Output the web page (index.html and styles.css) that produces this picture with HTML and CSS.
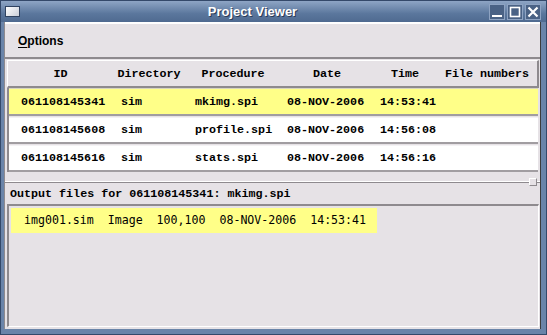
FILE: index.html
```html
<!DOCTYPE html>
<html lang="en">
<head>
  <meta charset="UTF-8" />
  <title>Project Viewer</title>
  <link rel="stylesheet" href="styles.css">
</head>
<body>

  <div class="win">
    <div class="titlebar">
      <span class="appicon"></span>
      <span class="title">Project Viewer</span>
      <div class="wbtns">
        <span class="wbtn">
          <svg width="14" height="14" viewBox="0 0 14 14"><rect x="2" y="10" width="10" height="2" fill="#fff"/></svg>
        </span>
        <span class="wbtn">
          <svg width="14" height="14" viewBox="0 0 14 14"><rect x="2.5" y="2.5" width="9" height="9" fill="none" stroke="#fff" stroke-width="1.6"/></svg>
        </span>
        <span class="wbtn">
          <svg width="14" height="14" viewBox="0 0 14 14"><path d="M2.5 2.5 L11.5 11.5 M11.5 2.5 L2.5 11.5" stroke="#fff" stroke-width="2.2"/></svg>
        </span>
      </div>
    </div>

    <div class="client">
      <div class="menubar">
        <span class="menu"><u>O</u>ptions</span>
      </div>

      <div class="toppane">
        <div class="thead">
          <span class="th">ID</span>
          <span class="th">Directory</span>
          <span class="th">Procedure</span>
          <span class="th">Date</span>
          <span class="th">Time</span>
          <span class="th">File numbers</span>
        </div>
        <div class="rows">
          <div class="row selected">
            <span class="td">061108145341</span>
            <span class="td">sim</span>
            <span class="td">mkimg.spi</span>
            <span class="td">08-NOV-2006</span>
            <span class="td">14:53:41</span>
            <span class="td"></span>
          </div>
          <div class="row">
            <span class="td">061108145608</span>
            <span class="td">sim</span>
            <span class="td">profile.spi</span>
            <span class="td">08-NOV-2006</span>
            <span class="td">14:56:08</span>
            <span class="td"></span>
          </div>
          <div class="row">
            <span class="td">061108145616</span>
            <span class="td">sim</span>
            <span class="td">stats.spi</span>
            <span class="td">08-NOV-2006</span>
            <span class="td">14:56:16</span>
            <span class="td"></span>
          </div>
        </div>
      </div>

      <div class="sash"><span class="handle"></span></div>

      <div class="bottompane">
        <div class="outlabel">Output files for 061108145341: mkimg.spi</div>
        <div class="listbox">
          <div class="item selected">img001.sim  Image  100,100  08-NOV-2006  14:53:41</div>
        </div>
      </div>
    </div>
  </div>

</body>
</html>
```

FILE: styles.css
```css
body {
  margin: 0;
  width: 547px;
  height: 335px;
  overflow: hidden;
  font-family: 'Liberation Sans', sans-serif;
  background: #6a84a9;
}

.win {
  box-sizing: border-box;
  height: 335px;
  display: flex;
  flex-direction: column;
  background: #6a84a9;
  border: 1px solid #34496a;
}

/* title bar */
.titlebar {
  height: 21px;
  display: flex;
  align-items: center;
  background: linear-gradient(#8ea5c5, #5b779d 60%, #4f6a90);
  position: relative;
}

.appicon {
  width: 13px;
  height: 9px;
  margin-left: 4px;
  margin-top: -1px;
  border: 1px solid #2f4260;
  background: linear-gradient(135deg, #ffffff, #c9ced8);
}

.title {
  flex: 1;
  text-align: center;
  color: #fff;
  font-weight: bold;
  font-size: 13px;
  text-shadow: 1px 1px 0 #2b3b57;
  margin-left: -4px;
}

.wbtns {
  display: flex;
  gap: 2px;
  margin-right: 5px;
}

.wbtn {
  width: 14px;
  height: 14px;
  display: flex;
  align-items: center;
  justify-content: center;
  background: #4a6285;
  border: 1px solid #8ea3c2;
}

/* client area */
.client {
  flex: 1;
  margin: 0 5px 5px 3px;
  display: flex;
  flex-direction: column;
  background: #e6e2e6;
  border-left: 1px solid #8e8a8e;
  border-right: 1px solid #3c3c3c;
}

.menubar {
  height: 33px;
  display: flex;
  align-items: center;
  border-top: 2px solid #ffffff;
  border-bottom: 2px solid #8e8a8e;
  padding-left: 13px;
}

.menu {
  font-weight: bold;
  font-size: 12px;
  color: #000;
  margin-top: 1px;
}

.menu u {
  text-decoration-thickness: 1px;
  text-underline-offset: 2px;
}

/* project table */
.toppane {
  height: 119px;
  margin: 1px 1px 0 2px;
  font-family: 'Liberation Mono', monospace;
  font-size: 11.7px;
  font-weight: bold;
  color: #000;
}

.thead,
.row {
  display: grid;
  grid-template-columns: 105px 72px 96px 92px 64px 1fr;
}

.thead {
  height: 25px;
  align-items: center;
  border-top: 1px solid #ffffff;
  border-left: 1px solid #ffffff;
  border-bottom: 2px solid #8e8a8e;
  border-right: 2px solid #8e8a8e;
}

.th {
  text-align: center;
}

.rows {
  border-left: 2px solid #8e8a8e;
}

.row {
  height: 24px;
  align-items: center;
  margin-top: 1px;
  background: #ffffff;
  border-top: 1px solid #f4f2f4;
  border-bottom: 2px solid #a19da1;
  margin-right: 1px;
}

.row.selected {
  background: #ffff88;
  border-top-color: #d8d6c0;
  margin-top: 0;
  height: 25px;
}

.td:nth-child(1) { padding-left: 12px; }
.td:nth-child(2) { padding-left: 7px; }
.td:nth-child(3) { padding-left: 9px; }
.td:nth-child(4) { padding-left: 5px; }
.td:nth-child(5) { padding-left: 6px; }

/* pane separator */
.sash {
  height: 6px;
  position: relative;
  margin-top: 0;
}

.sash::before {
  content: "";
  position: absolute;
  left: 0;
  right: 0;
  top: 2px;
  height: 1px;
  background: #ffffff;
  border-bottom: 1px solid #8e8a8e;
}

.handle {
  position: absolute;
  right: 3px;
  top: -1px;
  width: 6px;
  height: 6px;
  background: #e6e2e6;
  border: 1px solid #8e8a8e;
  border-top-color: #ffffff;
  border-left-color: #ffffff;
}

/* output files */
.bottompane {
  flex: 1;
  display: flex;
  flex-direction: column;
}

.outlabel {
  height: 19px;
  line-height: 19px;
  padding-left: 5px;
  font-family: 'Liberation Mono', monospace;
  font-size: 11.7px;
  font-weight: bold;
  color: #000;
}

.listbox {
  flex: 1;
  margin: 0 1px 2px 2px;
  padding: 2px 2px;
  border-top: 2px solid #8e8a8e;
  border-left: 2px solid #8e8a8e;
  border-bottom: 1px solid #ffffff;
  border-right: 1px solid #ffffff;
}

.item {
  display: inline-block;
  height: 25px;
  line-height: 25px;
  padding: 0 11px 0 13px;
  white-space: pre;
  font-family: 'DejaVu Sans Mono', monospace;
  font-size: 11.6px;
  color: #000;
}

.item.selected {
  background: #ffff88;
}
```
